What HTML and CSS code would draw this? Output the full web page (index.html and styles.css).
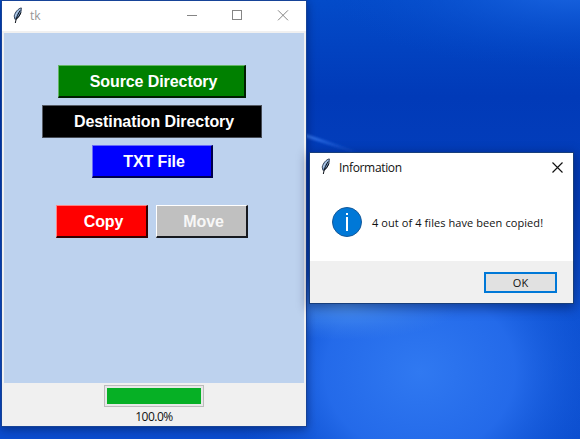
FILE: index.html
```html
<!DOCTYPE html>
<html lang="en">
<head>
<meta charset="utf-8">
<title>tk</title>
<link rel="stylesheet" href="styles.css">
</head>
<body>
<svg width="0" height="0" class="defs" aria-hidden="true">
  <symbol id="feather" viewBox="0 0 12 17">
    <path d="M9.300.9C6 1.600 3.100 5.200 2.200 9l.7 3.200 1.500-.1C7.200 9.500 9.700 5 9.300.9Z" fill="#7da0cb" stroke="#26364d" stroke-width=".9"/>
    <path d="M8 2.500C5.600 4.300 4 7 3.300 9.600" fill="none" stroke="#c3d8ee" stroke-width="1"/>
    <path d="M8.200 3.500C6.300 6.500 4.300 10 3.300 16M9 5.500C7.800 8.500 6.300 10.700 4.300 12" fill="none" stroke="#0b1018" stroke-width="1"/>
  </symbol>
</svg>
<main class="desktop">
  <svg class="wallpaper" viewBox="0 0 580 439" aria-hidden="true">
    <defs>
      <linearGradient id="sky" x1="0" y1="0" x2="0" y2="1">
        <stop offset="0" stop-color="#034bc9"/><stop offset=".22" stop-color="#013ab8"/>
        <stop offset=".45" stop-color="#0440bd"/><stop offset=".68" stop-color="#0c50d1"/>
        <stop offset="1" stop-color="#0b4dce"/>
      </linearGradient>
      <radialGradient id="glow"><stop offset="0" stop-color="#3079f1"/><stop offset=".5" stop-color="#286fee" stop-opacity=".85"/><stop offset="1" stop-color="#1259da" stop-opacity="0"/></radialGradient>
      <radialGradient id="corner"><stop offset="0" stop-color="#1b66e2"/><stop offset="1" stop-color="#0449c9" stop-opacity="0"/></radialGradient>
      <radialGradient id="haze"><stop offset="0" stop-color="#4b92f1"/><stop offset="1" stop-color="#3b80eb" stop-opacity="0"/></radialGradient>
      <linearGradient id="streak"><stop offset="0" stop-color="#3b7cf0"/><stop offset="1" stop-color="#1254d2" stop-opacity="0"/></linearGradient>
      <filter id="soft" x="-20%" y="-50%" width="140%" height="200%"><feGaussianBlur stdDeviation="1.2"/></filter>
    </defs>
    <rect width="580" height="439" fill="url(#sky)"/>
    <ellipse cx="570" cy="-12" rx="250" ry="80" fill="url(#corner)"/>
    <ellipse cx="420" cy="372" rx="190" ry="165" fill="url(#glow)"/>
    <ellipse cx="345" cy="306" rx="115" ry="34" fill="url(#haze)"/>
    <path d="M304 135 364 155" stroke="url(#streak)" stroke-width="3" filter="url(#soft)"/>
  </svg>

  <section class="window app">
    <header class="titlebar">
      <svg class="feather"><use href="#feather"/></svg>
      <span class="title">tk</span>
      <svg class="controls" width="104" height="12" viewBox="0 0 104 12" fill="none" stroke="#858585">
        <path d="M0 6.500h10"/><rect x="45.500" y="1.500" width="9" height="9"/><path d="m91 1.300 10 10m0-10-10 10"/>
      </svg>
    </header>
    <div class="canvas">
      <button class="btn source">Source Directory</button>
      <button class="btn destination">Destination Directory</button>
      <button class="btn txt">TXT File</button>
      <div class="actions">
        <button class="btn copy">Copy</button>
        <button class="btn move">Move</button>
      </div>
    </div>
    <footer class="status">
      <div class="progress"><div class="fill"></div></div>
      <span class="percent">100.0%</span>
    </footer>
  </section>

  <section class="window dialog">
    <header class="dialog-title">
      <svg class="feather"><use href="#feather"/></svg>
      <span class="title">Information</span>
      <svg class="close" width="11" height="11" viewBox="0 0 11 11" fill="none" stroke="#111" stroke-width="1.15"><path d="m.5.5 10 10m0-10-10 10"/></svg>
    </header>
    <div class="message">
      <svg class="info" width="30" height="30" viewBox="0 0 30 30"><circle cx="15" cy="15" r="14.500" fill="#0078d7" stroke="#14599a"/><path d="M14 6h2v2h-2zM14 10h2v14h-2z" fill="#fff"/></svg>
      <span class="message-text">4 out of 4 files have been copied!</span>
    </div>
    <footer class="dialog-actions"><button class="ok"><span>OK</span></button></footer>
  </section>
</main>
</body>
</html>
```
FILE: styles.css
```css
* { box-sizing: border-box; }
body { margin: 0; overflow: hidden; font: 12px/16px "Open Sans", "Noto Sans", sans-serif; color: #111; }
button { font: inherit; margin: 0; padding: 0; border-radius: 0; }
svg { display: block; flex: none; }
span { white-space: nowrap; }
.defs { position: absolute; }
.desktop { position: relative; width: 580px; height: 439px; overflow: hidden; }
.wallpaper { position: absolute; inset: 0; width: 580px; height: 439px; }
.window { position: absolute; display: flex; flex-direction: column; }
.app { left: 2px; top: 1px; width: 304px; height: 425px; background: #f0f0f0; box-shadow: 0 0 0 1px #164398, 0 2px 9px 1px rgba(0, 15, 60, .5); }
.titlebar { display: flex; align-items: center; height: 30px; padding: 0 15px 2px 10px; background: #fff; color: #969696; }
.feather { width: 12px; height: 17px; }
.titlebar .title { margin-left: 6px; padding-top: 2px; }
.controls { margin-left: auto; }
.canvas { display: flex; flex-direction: column; align-items: center; gap: 7px; width: 300px; height: 350px; margin: 2px 2px 0; padding: 32px 4px 0 0; background: #bdd2ee; }
.btn { height: 33px; border: 1px solid; border-right-width: 2px; border-bottom-width: 2px; color: #fff; font: bold 16px/29px "Liberation Sans", Arial, sans-serif; letter-spacing: -.08px; white-space: nowrap; }
.source { width: 188px; padding-left: 4px; background: #008000; border-color: #65b665 #001d00 #001d00 #65b665; }
.destination { width: 220px; padding-left: 4px; background: #000; border-color: #565b64 #454a53 #454a53 #565b64; border-right-width: 1px; border-bottom-width: 1px; box-shadow: inset -1px -1px #000; }
.txt { width: 121px; margin-left: 1px; padding-left: 4px; background: #00f; border-color: #696cf8 #00004d #00004d #696cf8; }
.actions { display: flex; gap: 8px; margin-top: 20px; }
.copy { width: 92px; padding-left: 4px; background: #f00; border-color: #ff8585 #300 #300 #ff8585; }
.move { width: 92px; padding-left: 4px; background: #c0c0c0; border-color: #fff #16191f #16191f #fff; color: #f7f7f7; }
.status { display: flex; flex-direction: column; align-items: center; padding-top: 2px; }
.progress { width: 100px; height: 22px; margin-right: 1px; padding: 2px; border: 1px solid #bcbcbc; background: #e8e8e8; }
.fill { width: 94px; height: 16px; background: #06b025; }
.percent { margin-top: 2px; font-size: 12px; letter-spacing: -.5px; }
.dialog { left: 310px; top: 153px; width: 263px; height: 150px; background: #fff; box-shadow: 0 0 0 1px #173e7c, 0 3px 11px 2px rgba(0, 15, 60, .48); }
.dialog-title { display: flex; align-items: center; height: 30px; padding: 0 10px; }
.dialog-title .title { margin-left: 7px; letter-spacing: -.35px; }
.dialog-title .feather { margin-top: -3px; }
.close { margin-left: auto; margin-top: -2px; }
.message { display: flex; align-items: center; height: 78px; padding-left: 22px; }
.message-text { margin-left: 10px; padding-top: 2px; font-size: 11px; letter-spacing: .08px; }
.dialog-actions { display: flex; justify-content: flex-end; height: 42px; padding: 11px 16px 0 0; background: #f0f0f0; }
.ok { width: 73px; height: 21px; border: 2px solid #0078d7; background: #e1e1e1; font-size: 11px; line-height: 17px; color: #111; }
```
